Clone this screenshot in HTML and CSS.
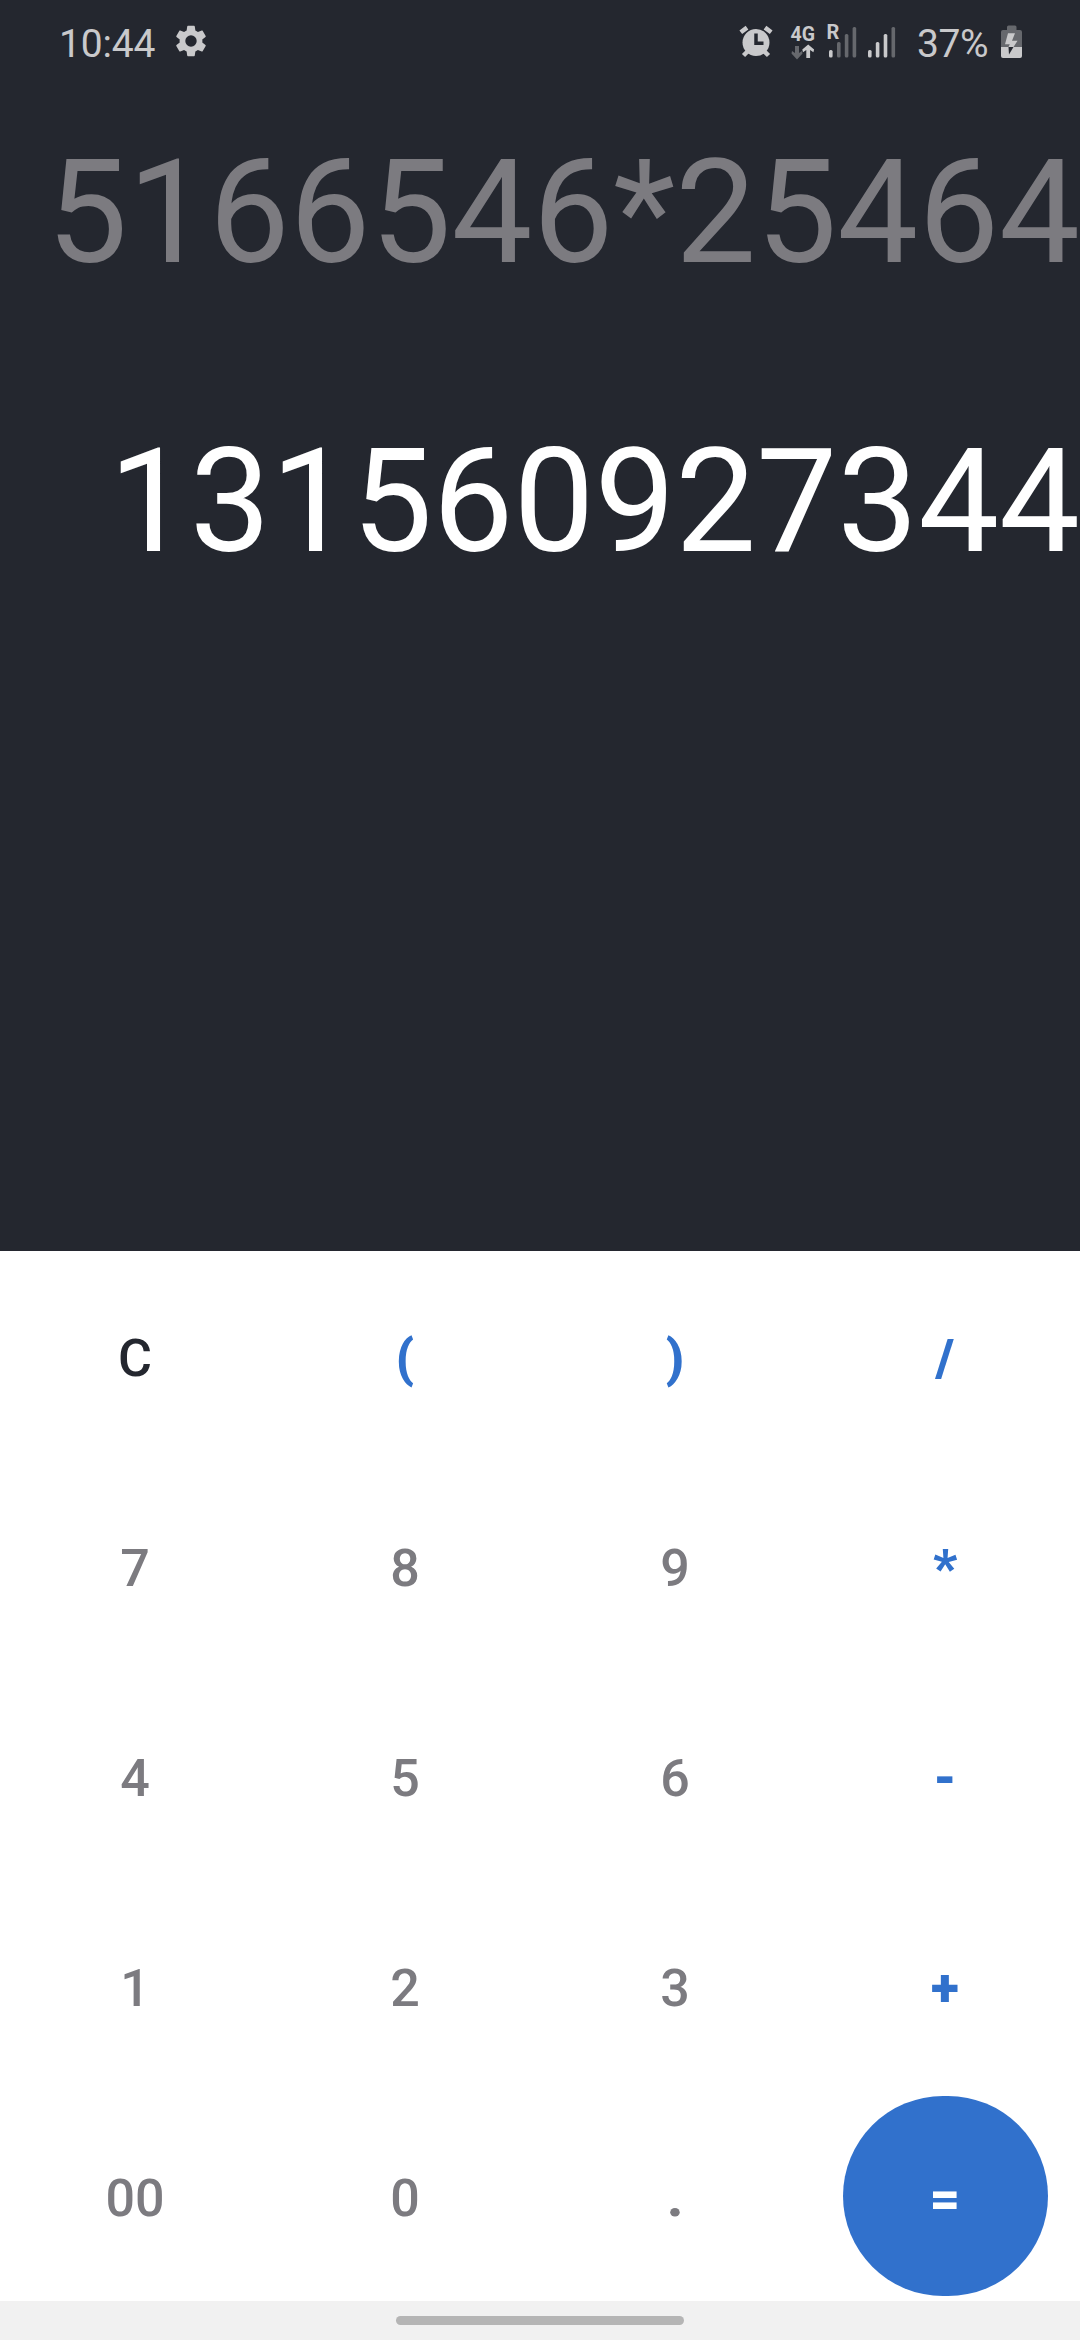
FILE: index.html
```html
<!DOCTYPE html>
<html lang="en">
<head>
<meta charset="utf-8">
<title>Calculator</title>
<link rel="stylesheet" href="styles.css">
</head>
<body>
<main class="app">
<section class="display">
<header class="status">
<span class="time">10:44</span>
<svg class="gear" width="38" height="84" viewBox="172 0 38 84"><path transform="translate(172 22) scale(1.583)" d="M19.140 12.940c.04-.3.060-.61.060-.94s-.02-.64-.07-.94l2.030-1.580c.18-.14.230-.41.120-.61l-1.920-3.320c-.12-.22-.37-.29-.59-.22l-2.390.96c-.5-.38-1.030-.7-1.620-.94l-.36-2.540c-.04-.24-.24-.41-.48-.41h-3.840c-.24 0-.43.170-.47.410l-.36 2.540c-.59.240-1.130.570-1.620.94l-2.390-.96c-.22-.08-.47 0-.59.220L2.740 8.870c-.12.210-.08.470.120.610l2.030 1.580c-.05.300-.09.630-.09.940s.02.640.070.940l-2.030 1.580c-.18.140-.23.410-.12.610l1.920 3.320c.12.220.370.290.590.220l2.390-.96c.5.380 1.030.700 1.620.940l.36 2.540c.05.240.240.410.480.410h3.840c.24 0 .44-.17.470-.41l.36-2.540c.59-.24 1.130-.56 1.620-.94l2.390.96c.22.080.470 0 .59-.22l1.920-3.320c.12-.22.070-.47-.12-.61zM12 15.600A3.600 3.600 0 1 1 12 8.400a3.600 3.600 0 0 1 0 7.200z"/></svg>
<div class="indicators">
<svg class="alarm" width="40" height="84" viewBox="736 0 40 84"><circle cx="756" cy="42.500" r="13.500"/><path class="line" d="M740.800 32.300l6.200-4.700M771.200 32.300l-6.200-4.700"/><path class="line" d="M749 50l-5.500 5.500M763 50l5.500 5.500"/><path class="hands" d="M756 33.500v9.800h7.500"/></svg>
<svg class="data" width="34" height="84" viewBox="786 0 34 84"><text x="790.500" y="41" textLength="24.500" lengthAdjust="spacingAndGlyphs">4G</text><path class="dim" d="M795 46h4v7l3-2 .5 2.500-5.500 6-5.500-6 .5-2.500 3 2z"/><path d="M806.300 58v-8l-3.300 2.300-.7-2.800 5.900-5 5.900 5-.7 2.800-3.300-2.300v8z"/></svg>
<svg class="signal" width="36" height="84" viewBox="824 0 36 84"><text x="826.500" y="39">R</text><rect x="829" y="50" width="3.600" height="7.500" rx="1.500"/><g class="dim"><rect x="837" y="42" width="3.600" height="15.500" rx="1.500"/><rect x="844.800" y="34" width="3.600" height="23.500" rx="1.500"/><rect x="852.600" y="27" width="3.600" height="30.500" rx="1.500"/></g></svg>
<svg class="signal second" width="36" height="84" viewBox="864 0 36 84"><rect x="868" y="50" width="3.600" height="7.500" rx="1.500"/><rect x="875.800" y="42" width="3.600" height="15.500" rx="1.500"/><rect x="883.700" y="34" width="3.600" height="23.500" rx="1.500"/><rect class="dim" x="891.500" y="27" width="3.600" height="30.500" rx="1.500"/></svg>
<span class="percent">37%</span>
<svg class="battery" width="28" height="84" viewBox="998 0 28 84"><path class="dim" d="M1007 30v-3q0-1.500 1.500-1.500h6.500q1.500 0 1.500 1.500v3h3.500q2 0 2 2v15h-21V32q0-2 2-2z"/><path d="M1001 47h21v9q0 2-2 2h-17q-2 0-2-2z"/><path class="cut" d="M1008.500 47h5l-4.500 7.500z"/><path d="M1008 33.300h7l-3 7.500h5.500l-4 6.200h-5l1.300-2.700h-4.800z"/></svg>
</div>
</header>
<div class="expression">5166546*25464</div>
<div class="result">131560927344</div>
</section>
<section class="keys">
<button class="key clear">C</button><button class="key op">(</button><button class="key op">)</button><button class="key op">/</button>
<button class="key">7</button><button class="key">8</button><button class="key">9</button><button class="key op">*</button>
<button class="key">4</button><button class="key">5</button><button class="key">6</button><button class="key op">-</button>
<button class="key">1</button><button class="key">2</button><button class="key">3</button><button class="key op">+</button>
<button class="key">00</button><button class="key">0</button><button class="key point">.</button><button class="key equals">=</button>
</section>
<footer class="nav"><div class="handle"></div></footer>
</main>
</body>
</html>
```
FILE: styles.css
```css
body{margin:0;font-family:Roboto,sans-serif}
.app{width:1080px;height:2340px;display:flex;flex-direction:column;background:#fff;overflow:hidden}
.display{height:1251px;background:#24272f;color:#fff}
.status{height:84px;display:flex;align-items:center;padding:0 54px 0 59px;font-size:39px;color:#c9c9cb;fill:#c9c9cb}
.time,.percent{line-height:46px;padding-top:3px}
.time{width:113px;letter-spacing:-.2px}
.indicators{display:flex;align-items:center;margin-left:auto}
.data{margin-left:10px}
.signal{margin-left:4px}
.data text,.signal text{font:700 20px Roboto,sans-serif}
.percent{width:81px;margin-left:17px;letter-spacing:-.4px}
.line{fill:none;stroke:#c9c9cb;stroke-width:4.500}
.hands{fill:none;stroke:#24272f;stroke-width:3.500}
.dim{fill:#66686d}
.cut{fill:#24272f}
.expression,.result{font-size:144px;line-height:170px;height:170px;text-align:right}
.expression{margin-top:44px;color:#7c7b80}
.result{margin-top:119px}
.keys{height:1050px;display:grid;grid-template-columns:repeat(4,270px);grid-template-rows:repeat(5,210px)}
.key{border:0;padding:4px 0 0;background:none;font:500 52px Roboto,sans-serif;color:#7c7b80}
.clear{color:#24272f}
.op{color:#3171cc;font-weight:900}
.point{font-weight:900}
.equals{color:#fff;background:#3171cc;width:205px;height:200px;border-radius:100px;place-self:center;font-weight:900}
.nav{height:39px;background:#f1f1f1;display:flex;justify-content:center;align-items:center}
.handle{width:288px;height:9px;border-radius:5px;background:#b5b5b5}
```
